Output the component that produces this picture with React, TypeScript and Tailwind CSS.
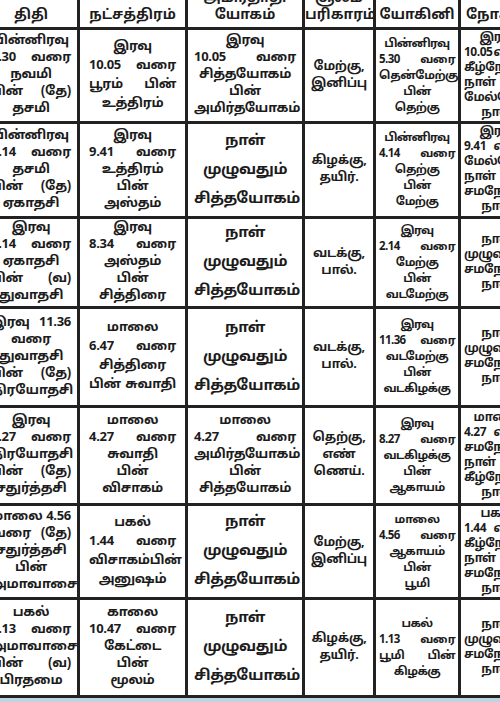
import React from "react";

const FONT = '"Noto Sans Tamil", "Lohit Tamil", "Noto Sans", "DejaVu Sans", sans-serif';

type Cell = { t: string; big?: boolean };

const rows: { h: string; cells: Cell[] }[] = [
  {
    h: "h-[94px]",
    cells: [
      { t: "பின்னிரவு|5.30 வரை|நவமி|பின் (தே)|தசமி" },
      { t: "இரவு|10.05 வரை|பூரம் பின்|உத்திரம்" },
      { t: "இரவு|10.05 வரை|சித்தயோகம்|பின்|அமிர்தயோகம்" },
      { t: "மேற்கு,|இனிப்பு" },
      { t: "பின்னிரவு|5.30 வரை|தென்மேற்கு|பின்|தெற்கு" },
      { t: "இரவு|10.05 வரை|கீழ்நோக்கு|நாள் பின்|மேல்நோக்கு|நாள்" },
    ],
  },
  {
    h: "h-[95px]",
    cells: [
      { t: "பின்னிரவு|4.14 வரை|தசமி|பின் (தே)|ஏகாதசி" },
      { t: "இரவு|9.41 வரை|உத்திரம்|பின்|அஸ்தம்" },
      { t: "நாள்|முழுவதும்|சித்தயோகம்", big: true },
      { t: "கிழக்கு,|தயிர்." },
      { t: "பின்னிரவு|4.14 வரை|தெற்கு|பின்|மேற்கு" },
      { t: "இரவு|9.41 வரை|மேல்நோக்கு|நாள் பின்|சமநோக்கு|நாள்" },
    ],
  },
  {
    h: "h-[85px]",
    cells: [
      { t: "இரவு|2.14 வரை|ஏகாதசி|பின் (வ)|துவாதசி" },
      { t: "இரவு|8.34 வரை|அஸ்தம்|பின்|சித்திரை" },
      { t: "நாள்|முழுவதும்|சித்தயோகம்", big: true },
      { t: "வடக்கு,|பால்." },
      { t: "இரவு|2.14 வரை|மேற்கு|பின்|வடமேற்கு" },
      { t: "நாள்|முழுவதும்|சமநோக்கு|நாள்" },
    ],
  },
  {
    h: "h-[99px]",
    cells: [
      { t: "இரவு 11.36|வரை|துவாதசி|பின் (தே)|திரயோதசி" },
      { t: "மாலை|6.47 வரை|சித்திரை|பின் சுவாதி" },
      { t: "நாள்|முழுவதும்|சித்தயோகம்", big: true },
      { t: "வடக்கு,|பால்." },
      { t: "இரவு|11.36 வரை|வடமேற்கு|பின்|வடகிழக்கு" },
      { t: "நாள்|முழுவதும்|சமநோக்கு|நாள்" },
    ],
  },
  {
    h: "h-[98px]",
    cells: [
      { t: "இரவு|8.27 வரை|திரயோதசி|பின் (தே)|சதுர்த்தசி" },
      { t: "மாலை|4.27 வரை|சுவாதி|பின்|விசாகம்" },
      { t: "மாலை|4.27 வரை|அமிர்தயோகம்|பின்|சித்தயோகம்" },
      { t: "தெற்கு,|எண்|ணெய்." },
      { t: "இரவு|8.27 வரை|வடகிழக்கு|பின்|ஆகாயம்" },
      { t: "மாலை|4.27 வரை|சமநோக்கு|நாள் பின்|கீழ்நோக்கு|நாள்" },
    ],
  },
  {
    h: "h-[94px]",
    cells: [
      { t: "மாலை 4.56|வரை (தே)|சதுர்த்தசி|பின்|அமாவாசை" },
      { t: "பகல்|1.44 வரை|விசாகம் பின்|அனுஷம்" },
      { t: "நாள்|முழுவதும்|சித்தயோகம்", big: true },
      { t: "மேற்கு,|இனிப்பு" },
      { t: "மாலை|4.56 வரை|ஆகாயம்|பின்|பூமி" },
      { t: "பகல்|1.44 வரை|கீழ்நோக்கு|நாள் பின்|சமநோக்கு|நாள்" },
    ],
  },
  {
    h: "h-[98px]",
    cells: [
      { t: "பகல்|1.13 வரை|அமாவாசை|பின் (வ)|பிரதமை" },
      { t: "காலை|10.47 வரை|கேட்டை|பின்|மூலம்" },
      { t: "நாள்|முழுவதும்|சித்தயோகம்", big: true },
      { t: "கிழக்கு,|தயிர்." },
      { t: "பகல்|1.13 வரை|பூமி பின்|கிழக்கு" },
      { t: "நாள்|முழுவதும்|சமநோக்கு|நாள்" },
    ],
  },
];

const headers = ["திதி", "நட்சத்திரம்", "அமிர்தாதி|யோகம்", "சூலம்|பரிகாரம்", "யோகினி", "நோக்கு"];

const pads = ["px-[6px]", "px-[9px]", "px-[6px]", "px-[3px]", "px-[3px]", "px-[3px]"];
const sizes = [
  "text-[13px] tracking-[-0.3px]",
  "text-[13px] tracking-[-0.3px]",
  "text-[13px] tracking-[-0.3px]",
  "text-[12.5px] tracking-[-0.3px]",
  "text-[11.5px] tracking-[-0.6px]",
  "text-[12px] tracking-[-0.5px]",
];
const lh = [
  "h-[17px] leading-[17px]",
  "h-[19px] leading-[19px]",
  "h-[17px] leading-[17px]",
  "h-[17px] leading-[17px]",
  "h-[16px] leading-[16px]",
  "h-[15px] leading-[15px]",
];

function Line({ s, hcls }: { s: string; hcls: string }) {
  const words = s.split(" ");
  if (words.length > 1) {
    return (
      <div className={`${hcls} flex justify-between whitespace-nowrap`}>
        {words.map((w, i) => (
          <span key={i} className={hcls}>
            {w}
          </span>
        ))}
      </div>
    );
  }
  return <div className={`${hcls} text-center whitespace-nowrap`}>{s}</div>;
}

function CellBody({ c, col }: { c: Cell; col: number }) {
  const lines = c.t.split("|");
  const size = c.big ? "text-[15px] tracking-[-0.4px]" : sizes[col];
  const hcls = c.big
    ? "h-[29px] leading-[29px]"
    : col === 1 && lines.length >= 5
    ? "h-[17px] leading-[17px]"
    : lh[col];
  return (
    <div className={`${pads[col]} ${size} font-bold`}>
      {lines.map((l, i) => (
        <Line key={i} s={l} hcls={hcls} />
      ))}
    </div>
  );
}

export default function App() {
  return (
    <div className="w-[500px] h-[702px] bg-white flex flex-col overflow-hidden" style={{ fontFamily: FONT }}>
      <div className="h-[698px] overflow-hidden">
        <table className="w-[551px] table-fixed border-collapse -ml-[18px] -mt-[13px] text-[#1c1c1c]">
          <colgroup>
            <col className="w-[95px]" />
            <col className="w-[108px]" />
            <col className="w-[117px]" />
            <col className="w-[71px]" />
            <col className="w-[85px]" />
            <col className="w-[75px]" />
          </colgroup>
          <thead>
            <tr>
              {headers.map((h, i) => (
                <th
                  key={i}
                  className="h-[40px] border-[3px] border-[#222] align-bottom p-0 pb-[3px] font-bold text-[14px] text-center whitespace-nowrap overflow-hidden"
                >
                  {h.split("|").map((l, j) => (
                    <div key={j} className="h-[17px] leading-[17px]">
                      {l}
                    </div>
                  ))}
                </th>
              ))}
            </tr>
          </thead>
          <tbody>
            {rows.map((r, ri) => (
              <tr key={ri}>
                {r.cells.map((c, ci) => (
                  <td key={ci} className={`${r.h} border-[3px] border-[#222] align-middle p-0 overflow-hidden`}>
                    <CellBody c={c} col={ci} />
                  </td>
                ))}
              </tr>
            ))}
          </tbody>
        </table>
      </div>
      <div className="h-[4px] bg-[#bcd5e5]" />
    </div>
  );
}
